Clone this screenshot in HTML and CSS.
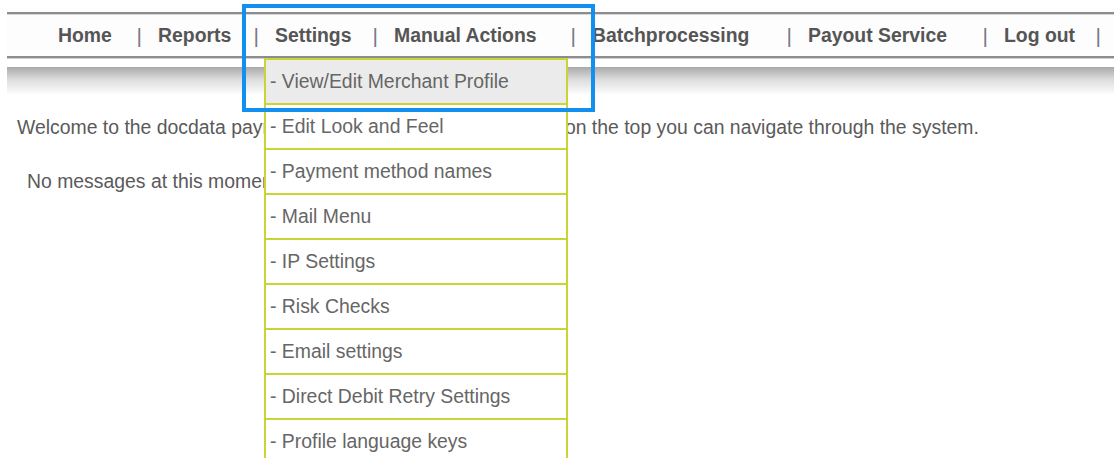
FILE: index.html
```html
<!DOCTYPE html>
<html lang="en">
<head>
<meta charset="utf-8">
<title>Merchant menu</title>
<link rel="stylesheet" href="styles.css">
</head>
<body>
<div class="page">
  <header class="topbar">
    <nav>
      <ul class="menu">
        <li class="menu-item"><a href="#">Home</a><span class="sep">|</span></li>
        <li class="menu-item"><a href="#">Reports</a><span class="sep">|</span></li>
        <li class="menu-item open"><a href="#">Settings</a><span class="sep">|</span>
          <ul class="dropdown">
            <li class="active"><a href="#">- View/Edit Merchant Profile</a></li>
            <li><a href="#">- Edit Look and Feel</a></li>
            <li><a href="#">- Payment method names</a></li>
            <li><a href="#">- Mail Menu</a></li>
            <li><a href="#">- IP Settings</a></li>
            <li><a href="#">- Risk Checks</a></li>
            <li><a href="#">- Email settings</a></li>
            <li><a href="#">- Direct Debit Retry Settings</a></li>
            <li><a href="#">- Profile language keys</a></li>
          </ul>
        </li>
        <li class="menu-item"><a href="#">Manual Actions</a><span class="sep">|</span></li>
        <li class="menu-item"><a href="#">Batchprocessing</a><span class="sep">|</span></li>
        <li class="menu-item"><a href="#">Payout Service</a><span class="sep">|</span></li>
        <li class="menu-item"><a href="#">Log out</a><span class="sep">|</span></li>
      </ul>
    </nav>
  </header>
  <div class="shade"></div>
  <main class="content">
    <p class="welcome">Welcome to the docdata payments back office. Using the menu on the top you can navigate through the system.</p>
    <p class="status">No messages at this moment.</p>
  </main>
  <div class="focus-ring"></div>
</div>
</body>
</html>
```

FILE: styles.css
```css
* {
  box-sizing: border-box;
}

html, body {
  margin: 0;
  padding: 0;
  background: #fff;
  overflow: hidden;
}

body {
  font-family: "Liberation Sans", Arial, sans-serif;
  color: #5a5a5a;
  width: 1114px;
  height: 458px;
}

.page {
  position: relative;
  padding-left: 7px;
  padding-top: 12px;
  height: 458px;
}

/* header bar with its double rules */
.topbar {
  border-top: 2px solid #8c8c8c;
  border-bottom: 2px solid #8c8c8c;
  box-shadow: inset 0 1px 0 #d8d8d8, 0 1px 0 #d0d0d0;
  background: #fdfdfd;
  height: 46px;
}

.menu {
  list-style: none;
  margin: 0;
  padding: 0 0 0 51px;
  display: grid;
  grid-template-columns: 100px 117px 119px 198px 216px 196px 113px;
  height: 42px;
  align-items: center;
}

.menu-item {
  position: relative;
  display: flex;
  justify-content: space-between;
  align-items: center;
  padding-right: 16px;
  height: 42px;
  padding-top: 1px;
}

.menu-item > a {
  font-size: 19.4px;
  font-weight: bold;
  color: #555;
  text-decoration: none;
  white-space: nowrap;
}

.sep {
  font-size: 21px;
  color: #787688;
}

/* settings submenu */
.dropdown {
  position: absolute;
  top: 44px;
  left: -11px;
  width: 304px;
  margin: 0;
  padding: 0;
  list-style: none;
  border: 2px solid #c9d535;
  border-bottom: none;
  background: #fff;
  z-index: 2;
}

.dropdown li {
  border-bottom: 2px solid #c9d535;
  height: 45px;
}

.dropdown li a {
  display: block;
  height: 43px;
  line-height: 43px;
  padding-left: 4px;
  font-size: 19.4px;
  color: #666;
  text-decoration: none;
  white-space: nowrap;
}

.dropdown li.active {
  background: #ebebeb;
}

/* fading shadow under the header */
.shade {
  margin-top: 9px;
  height: 28px;
  background: linear-gradient(#a9a9a9, #dcdcdc 45%, #fff);
}

.content {
  padding-left: 10px;
}

.content p {
  margin: 0;
  font-size: 19.4px;
  line-height: 22px;
  white-space: nowrap;
}

.welcome {
  padding-top: 21px;
}

.status {
  margin-top: 32px !important;
  padding-left: 10px;
}

/* highlight frame around the settings entry */
.focus-ring {
  position: absolute;
  left: 242px;
  top: 4px;
  width: 353px;
  height: 108px;
  border: 4px solid #1190f0;
  z-index: 3;
}
```
